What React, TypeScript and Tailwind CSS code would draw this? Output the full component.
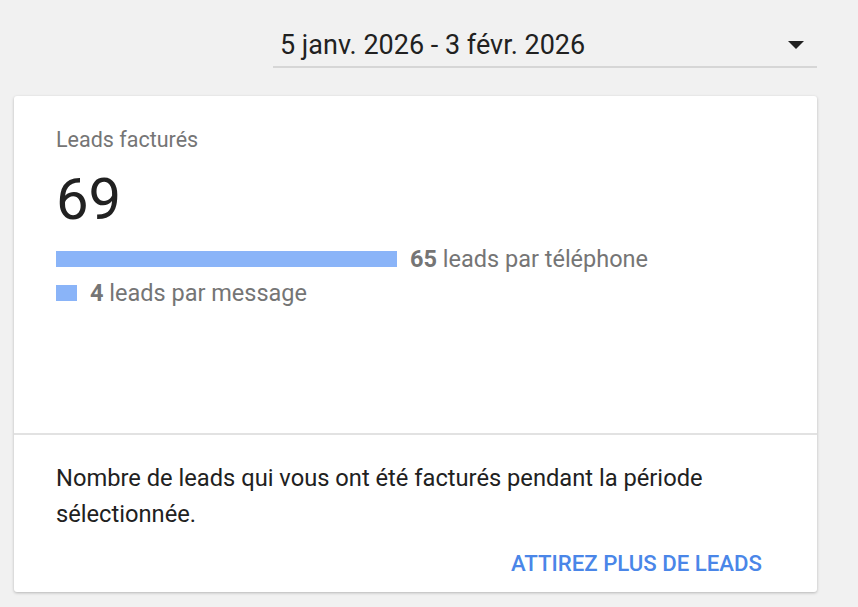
import React from 'react';

const font = { fontFamily: 'Roboto, "Liberation Sans", sans-serif' };

const App: React.FC = () => {
    return (
        <div style={font} className="w-[858px] h-[607px] bg-[#f1f1f1] overflow-hidden">
            <div className="flex justify-end pr-[41px] pt-[24px]">
                <div className="w-[544px] h-[44px] flex items-center justify-between border-b-2 border-[#d6d6d6] pl-[7px] pr-[13px] cursor-pointer">
                    <span className="text-[27px] text-[#212121] leading-none">5 janv. 2026 - 3 févr. 2026</span>
                    <svg width="16" height="8" viewBox="0 0 16 8">
                        <path d="M0 0 L16 0 L8 8 Z" fill="#212121" />
                    </svg>
                </div>
            </div>

            <div className="ml-[14px] mt-[28px] w-[803px] h-[496px] bg-white rounded-[3px] shadow-[0_1px_3px_rgba(0,0,0,0.25)] flex flex-col">
                <div className="h-[339px] pl-[42px] pt-[30px] border-b-2 border-[#e2e2e2]">
                    <div className="text-[21.5px] text-[#757575] leading-[28px]">Leads facturés</div>
                    <div className="text-[58px] text-[#212121] leading-[64px] mt-[13px]">69</div>
                    <div className="mt-[20px] flex flex-col gap-[18px]">
                        <div className="flex items-center">
                            <div className="w-[341px] h-[16px] bg-[#8ab4f8]" />
                            <span className="ml-[13px] text-[23.5px] text-[#757575] leading-[16px]">
                                <b className="font-bold">65</b> leads par téléphone
                            </span>
                        </div>
                        <div className="flex items-center">
                            <div className="w-[21px] h-[16px] bg-[#8ab4f8]" />
                            <span className="ml-[13px] text-[23.5px] text-[#757575] leading-[16px]">
                                <b className="font-bold">4</b> leads par message
                            </span>
                        </div>
                    </div>
                </div>
                <div className="flex-1 pl-[42px] pr-[55px] pt-[25px]">
                    <p className="text-[23.7px] text-[#212121] leading-[36px] w-[700px]">
                        Nombre de leads qui vous ont été facturés pendant la période sélectionnée.
                    </p>
                    <div className="flex justify-end mt-[20px]">
                        <button className="text-[22.2px] font-medium text-[#4a86e8] leading-none">ATTIREZ PLUS DE LEADS</button>
                    </div>
                </div>
            </div>
        </div>
    );
};

export default App;
